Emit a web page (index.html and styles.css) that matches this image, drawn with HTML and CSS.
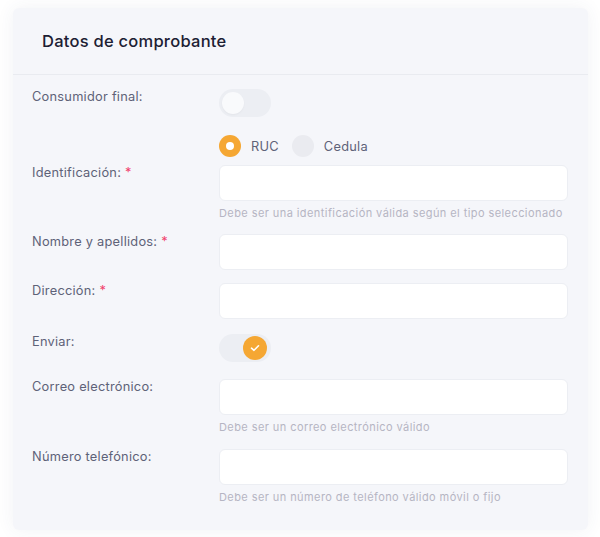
FILE: index.html
```html
<!DOCTYPE html>
<html lang="es">
<head>
<meta charset="utf-8">
<title>Datos de comprobante</title>
<link rel="stylesheet" href="styles.css">
</head>
<body>
<div class="card">
  <div class="card-header">
    <h3 class="card-title">Datos de comprobante</h3>
  </div>
  <div class="card-body">
    <div class="row row-toggle1">
      <label class="label">Consumidor final:</label>
      <div class="field">
        <span class="switch"><span class="thumb"></span></span>
      </div>
    </div>
    <div class="row row-radio">
      <span class="label"></span>
      <div class="field radios">
        <span class="radio checked"><span class="dot"></span></span>
        <span class="radio-text">RUC</span>
        <span class="radio"></span>
        <span class="radio-text">Cedula</span>
      </div>
    </div>
    <div class="row row-help">
      <label class="label">Identificación: <span class="req">*</span></label>
      <div class="field">
        <input class="input" type="text">
        <div class="help">Debe ser una identificación válida según el tipo seleccionado</div>
      </div>
    </div>
    <div class="row row-plain">
      <label class="label">Nombre y apellidos: <span class="req">*</span></label>
      <div class="field"><input class="input" type="text"></div>
    </div>
    <div class="row row-plain2">
      <label class="label">Dirección: <span class="req">*</span></label>
      <div class="field"><input class="input" type="text"></div>
    </div>
    <div class="row row-toggle2">
      <label class="label">Enviar:</label>
      <div class="field">
        <span class="switch on"><span class="thumb">
          <svg width="10" height="8" viewBox="0 0 10 8"><path d="M1.5 4.2 L4 6.3 L8.5 1.8" fill="none" stroke="#ffffff" stroke-width="1.6" stroke-linecap="round" stroke-linejoin="round"/></svg>
        </span></span>
      </div>
    </div>
    <div class="row row-help2">
      <label class="label">Correo electrónico:</label>
      <div class="field">
        <input class="input" type="text">
        <div class="help">Debe ser un correo electrónico válido</div>
      </div>
    </div>
    <div class="row row-last">
      <label class="label">Número telefónico:</label>
      <div class="field">
        <input class="input" type="text">
        <div class="help">Debe ser un número de teléfono válido móvil o fijo</div>
      </div>
    </div>
  </div>
</div>
</body>
</html>
```
FILE: styles.css
```css
html, body {
  margin: 0;
  padding: 0;
  background: #ffffff;
}
body {
  font-family: "Inter", "Noto Sans", sans-serif;
  color: #5e6278;
}
.card {
  margin: 8px 12px 7px 13px;
  width: 575px;
  background: #f5f6fa;
  border-radius: 6px;
  box-shadow: 0 0 18px rgba(60, 70, 110, 0.07);
}
.card-header {
  height: 66px;
  display: flex;
  align-items: center;
  padding-left: 29px;
  border-bottom: 1px solid #e9ebf0;
}
.card-title {
  margin: 0;
  font-size: 16.5px;
  font-weight: 500;
  color: #1c2033;
  letter-spacing: 0.25px;
}
.card-body {
  padding: 14px 20px 25px 19px;
}
.row {
  display: grid;
  grid-template-columns: 187px 1fr;
  margin-bottom: 13px;
}
.row-toggle1 { margin-bottom: 18px; }
.row-radio { margin-bottom: 8px; }
.row-plain2 { margin-bottom: 15px; }
.row-toggle2 { margin-bottom: 17px; }
.row-help2 { margin-bottom: 14px; }
.row-last { margin-bottom: 0; }
.label {
  font-size: 12.8px;
  line-height: 16px;
  letter-spacing: 0.25px;
  color: #5e6278;
}
.req {
  color: #f1416c;
}
.field {
  display: flex;
  flex-direction: column;
}
.input {
  box-sizing: border-box;
  width: 349px;
  height: 36px;
  margin: 0;
  background: #ffffff;
  border: 1px solid #eceef3;
  border-radius: 6px;
  outline: none;
}
.help {
  margin-top: 4px;
  font-size: 11px;
  line-height: 16px;
  letter-spacing: 0.42px;
  color: #b5b5c3;
}
.switch {
  box-sizing: border-box;
  width: 52px;
  height: 28px;
  border-radius: 14px;
  background: #eceef3;
  padding: 3px;
  display: flex;
  align-items: center;
}
.switch .thumb {
  width: 22px;
  height: 22px;
  border-radius: 50%;
  background: #f9fafc;
  box-shadow: 0 1px 2px rgba(0, 0, 0, 0.04);
}
.switch.on {
  justify-content: flex-end;
  padding: 2px 4px 2px 3px;
}
.switch.on .thumb {
  width: 24px;
  height: 24px;
  background: #f5a733;
  display: flex;
  align-items: center;
  justify-content: center;
  box-shadow: none;
}
.radios {
  flex-direction: row;
  align-items: center;
  height: 22px;
}
.radio {
  width: 22px;
  height: 22px;
  border-radius: 50%;
  background: #eaebf0;
  display: flex;
  align-items: center;
  justify-content: center;
}
.radio.checked {
  background: #f5a733;
}
.radio .dot {
  width: 8px;
  height: 8px;
  border-radius: 50%;
  background: #ffffff;
}
.radio-text {
  font-size: 12.8px;
  letter-spacing: 0.25px;
  color: #5e6278;
  margin-left: 10px;
  margin-right: 13px;
}
```
